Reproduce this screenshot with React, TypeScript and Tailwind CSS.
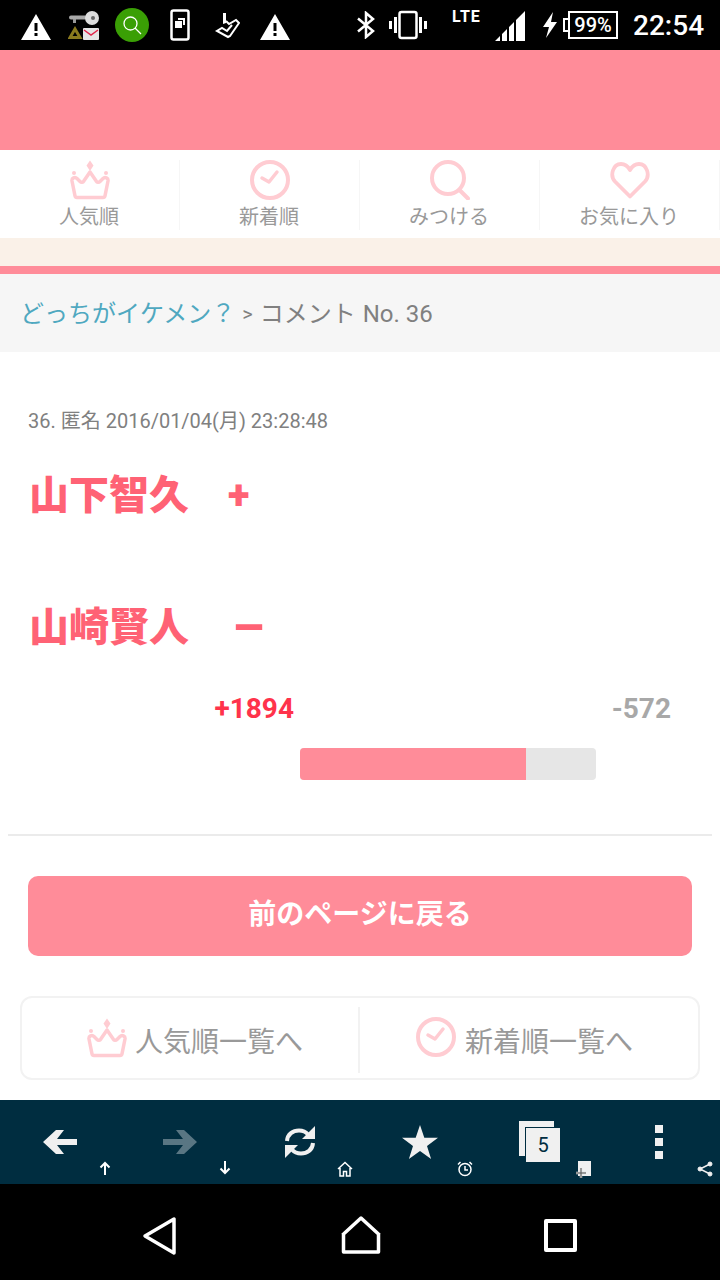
const jp = { fontFamily: 'Roboto, "Noto Sans CJK JP", sans-serif' };

const Crown = ({ className }: { className: string }) => (
  <svg viewBox="0 0 40 40" className={className} fill="none">
    <path d="M20 0.500l3.500 5-3.500 5.500-3.500-5.500z" fill="#ffccd2" />
    <circle cx="4" cy="13" r="2" fill="#ffccd2" />
    <circle cx="36" cy="13" r="2" fill="#ffccd2" />
    <path
      d="M7 37.500c-1 0-1.800-.7-2-1.600L2 21c-.5-3 3-4.500 5-2.500l3 3c1.200 1.200 3 1 3.800-.4L20 12l6.200 9.100c.8 1.400 2.600 1.600 3.800.4l3-3c2-2 5.500-.5 5 2.500l-3 14.900c-.2.900-1 1.600-2 1.600z"
      stroke="#ffccd2"
      strokeWidth="3.500"
      strokeLinejoin="round"
    />
  </svg>
);

const Clock = ({ className }: { className: string }) => (
  <svg viewBox="0 0 40 40" className={className} fill="none" stroke="#ffccd2">
    <circle cx="20" cy="20" r="18" strokeWidth="4" />
    <path d="M12 18l7 4 8-10" strokeWidth="3.500" strokeLinecap="round" strokeLinejoin="round" />
  </svg>
);

const Search = () => (
  <svg viewBox="0 0 40 40" className="w-10 h-10" fill="none" stroke="#ffccd2">
    <circle cx="18" cy="18" r="16" strokeWidth="4" />
    <path d="M29.500 30l8.500 8.500" strokeWidth="4" strokeLinecap="round" />
  </svg>
);

const Heart = () => (
  <svg viewBox="0 0 40 40" className="w-10 h-10" fill="none" stroke="#ffccd2">
    <path
      d="M20 36.500L5 21.500C-.5 15.500 3 4 11 4c4 0 7 2.500 9 6 2-3.500 5-6 9-6 8 0 11.500 11.500 6 17.500z"
      strokeWidth="3.800"
      strokeLinejoin="round"
    />
  </svg>
);

function StatusBar() {
  return (
    <div className="h-[50px] bg-black flex items-center relative shrink-0 text-white">
      <div className="flex items-center pl-[20px] w-[300px] h-full">
        {/* warning */}
        <svg viewBox="0 0 32 28" className="w-8 h-7 mt-[3px]">
          <path fillRule="evenodd" fill="#fff" d="M16 1L31 27H1zM14.500 10v8h3v-8zM14.500 20v3h3v-3z" />
        </svg>
        {/* key + mail */}
        <svg viewBox="0 0 32 32" className="w-8 h-8 ml-[16px] mt-[1px]">
          <rect x="1" y="5.500" width="18" height="4" rx="2" fill="#a8a8a8" />
          <circle cx="24" cy="8" r="7" fill="#ddd" />
          <circle cx="25" cy="8" r="2" fill="#666" />
          <rect x="5" y="9" width="3" height="4" fill="#999" />
          <path d="M7 19l5 8.500H2z" fill="none" stroke="#8a7a1e" strokeWidth="3" />
          <rect x="15" y="18" width="16" height="12" rx="1" fill="#e5e5e5" />
          <path d="M16 20l7 5 7-5" fill="none" stroke="#e0264a" strokeWidth="1.500" />
        </svg>
        <div className="w-[34px] h-[34px] rounded-full bg-[#3a9f05] ml-[15px] flex items-center justify-center">
          <svg viewBox="0 0 20 20" className="w-5 h-5" fill="none" stroke="#fff" strokeWidth="1.300">
            <circle cx="8.500" cy="8.500" r="6.500" />
            <path d="M13 13l6 6" />
          </svg>
        </div>
        <svg viewBox="0 0 20 32" className="w-5 h-8 ml-[21px]">
          <rect x="1.500" y="1.500" width="17" height="29" rx="2" fill="none" stroke="#fff" strokeWidth="2.500" />
          <path d="M8 9h7v7h-2v-5H8z" fill="#fff" />
          <rect x="5" y="12" width="7" height="7" fill="#fff" />
        </svg>
        <svg viewBox="0 0 26 28" className="w-[26px] h-7 ml-[24px]">
          <path d="M9 2h3v10l-3 1z" fill="#fff" />
          <path d="M12 10l3 3 7-4 3 3-9 13-2 1-11-6 5-3 5 3 5-6" fill="none" stroke="#fff" strokeWidth="2" />
        </svg>
        <svg viewBox="0 0 32 28" className="w-8 h-7 ml-[19px] mt-[3px]">
          <path fillRule="evenodd" fill="#fff" d="M16 1L31 27H1zM14.500 10v8h3v-8zM14.500 20v3h3v-3z" />
        </svg>
      </div>
      {/* bluetooth */}
      <svg viewBox="0 0 20 28" className="w-5 h-7 ml-[56px]" fill="none" stroke="#fff" strokeWidth="2.500">
        <path d="M2 7.500l15 12.500-7 6V2l7 6-15 12.500" />
      </svg>
      {/* vibrate */}
      <svg viewBox="0 0 38 30" className="w-[38px] h-[30px] ml-[13px]" fill="#fff">
        <rect x="10.500" y="2" width="17" height="26" rx="2" fill="none" stroke="#fff" strokeWidth="2.500" />
        <rect x="5" y="7" width="3" height="16" />
        <rect x="30" y="7" width="3" height="16" />
        <rect x="0" y="11" width="3" height="8" />
        <rect x="35" y="11" width="3" height="8" />
      </svg>
      <span className="absolute left-[452px] top-[7px] text-[16px] leading-[20px] font-bold tracking-[1px]" style={{ fontFamily: "Roboto, sans-serif" }}>
        LTE
      </span>
      <svg viewBox="0 0 30 30" className="absolute left-[495px] top-[11px] w-[30px] h-[30px]" fill="#fff">
        <path d="M0 30l5-5v5zM7 23l5-5v12H7zM14 16l5-5v19h-5zM21 9l9-9v30h-9z" />
      </svg>
      <svg viewBox="0 0 16 26" className="absolute left-[542px] top-[12px] w-4 h-[26px]" fill="#fff">
        <path d="M11 0L1 15h6l-3 11 11-16H9z" />
      </svg>
      <div className="absolute left-[568px] top-[11px] w-[50px] h-[28px] border-2 border-white flex items-center justify-center text-[20px] leading-none font-medium" style={{ fontFamily: "Roboto, sans-serif" }}>
        99%
      </div>
      <div className="absolute left-[563px] top-[18px] w-[5px] h-[14px] border-2 border-r-0 border-white" />
      <span className="absolute left-[633px] top-[9px] text-[28px] leading-[34px] font-medium" style={{ fontFamily: "Roboto, sans-serif" }}>
        22:54
      </span>
    </div>
  );
}

const navItems = [
  { label: "人気順", icon: <Crown className="w-10 h-10" /> },
  { label: "新着順", icon: <Clock className="w-10 h-10" /> },
  { label: "みつける", icon: <Search /> },
  { label: "お気に入り", icon: <Heart /> },
];

function TopNav() {
  return (
    <div className="h-[88px] bg-white flex pt-[10px] shrink-0" style={jp}>
      {navItems.map((item) => (
        <div key={item.label} className="w-[180px] h-[70px] border-r border-[#f6f6f6] flex flex-col items-center">
          {item.icon}
          <span className="text-[20px] leading-[26px] mt-[4px] -ml-[1px] text-[#999]">{item.label}</span>
        </div>
      ))}
    </div>
  );
}

function Toolbar() {
  return (
    <div className="h-[84px] bg-[#002d40] grid grid-cols-6 shrink-0 text-white">
      <div className="relative">
        <svg viewBox="0 0 34 24" className="absolute left-[43px] top-[30px] w-[34px] h-6" fill="#f0f0f0">
          <path d="M13 0h8l-7 9h20v6H14l7 9h-8L0 12z" />
        </svg>
        <svg viewBox="0 0 12 14" className="absolute left-[99px] top-[61px] w-3 h-[14px]" fill="none" stroke="#fff" strokeWidth="2">
          <path d="M6 14V2M1.500 6.500L6 2l4.500 4.500" />
        </svg>
      </div>
      <div className="relative">
        <svg viewBox="0 0 34 24" className="absolute left-[43px] top-[30px] w-[34px] h-6" fill="#597683">
          <path d="M21 0h-8l7 9H0v6h20l-7 9h8l13-12z" />
        </svg>
        <svg viewBox="0 0 12 14" className="absolute left-[99px] top-[61px] w-3 h-[14px]" fill="none" stroke="#fff" strokeWidth="2">
          <path d="M6 0v12M1.500 7.500L6 12l4.500-4.500" />
        </svg>
      </div>
      <div className="relative">
        <svg viewBox="0 0 32 34" className="absolute left-[44px] top-[25px] w-8 h-[34px]" fill="none">
          <path d="M3 16C3.500 9 9 5.500 15 5.500c4 0 7 1.500 9 4" stroke="#f0f0f0" strokeWidth="4" />
          <path d="M31 1v13H18z" fill="#f0f0f0" />
          <path d="M29 18c-.5 7-6 10.500-12 10.500-4 0-7-1.500-9-4" stroke="#f0f0f0" strokeWidth="4" />
          <path d="M1 33V20h13z" fill="#f0f0f0" />
        </svg>
        <svg viewBox="0 0 16 16" className="absolute left-[97px] top-[61px] w-4 h-4" fill="none" stroke="#fff" strokeWidth="1.500">
          <path d="M1 8l7-6.500L15 8M3 7v8h3.500v-4.500h3V15H13V7" />
        </svg>
      </div>
      <div className="relative">
        <svg viewBox="0 0 36 34" className="absolute left-[42px] top-[25px] w-9 h-[34px]" fill="#f0f0f0">
          <path d="M18 0l4.300 12.800H36l-11 8.300 4.100 12.900L18 26l-11.100 8L11 21.100 0 12.800h13.700z" />
        </svg>
        <svg viewBox="0 0 16 16" className="absolute left-[97px] top-[61px] w-4 h-4" fill="none" stroke="#fff" strokeWidth="1.500">
          <circle cx="8" cy="8.500" r="6" />
          <path d="M8 5v4h3M1 3.500L3.500 1M15 3.500L12.500 1" />
        </svg>
      </div>
      <div className="relative">
        <div className="absolute left-[39px] top-[21px] w-[35px] h-[35px] bg-[#f0f0f0]" />
        <div className="absolute left-[45px] top-[27px] w-[36px] h-[36px] bg-[#f0f0f0] border border-[#002d40] flex items-center justify-center text-[20px] text-[#002d40]" style={{ fontFamily: "Roboto, sans-serif" }}>
          5
        </div>
        <div className="absolute left-[98px] top-[61px] w-[13px] h-[15px] bg-[#f0f0f0]" />
        <svg viewBox="0 0 10 10" className="absolute left-[96px] top-[68px] w-[10px] h-[10px]" fill="none">
          <path d="M5 0v10M0 5h10" stroke="#dcdcdc" strokeWidth="2.400" />
          <path d="M5 0v10M0 5h10" stroke="#555" strokeWidth="1" />
        </svg>
      </div>
      <div className="relative">
        <div className="absolute left-[55px] top-[25px] w-2 h-2 bg-[#f0f0f0]" />
        <div className="absolute left-[55px] top-[38px] w-2 h-2 bg-[#f0f0f0]" />
        <div className="absolute left-[55px] top-[51px] w-2 h-2 bg-[#f0f0f0]" />
        <svg viewBox="0 0 16 16" className="absolute left-[97px] top-[61px] w-4 h-4" fill="#f0f0f0" stroke="#f0f0f0">
          <path d="M13 3L3 8l10 5" fill="none" strokeWidth="1.500" />
          <circle cx="13" cy="3" r="2" />
          <circle cx="3" cy="8" r="2" />
          <circle cx="13" cy="13" r="2" />
        </svg>
      </div>
    </div>
  );
}

function NavBar() {
  return (
    <div className="h-[96px] bg-black shrink-0">
      <svg viewBox="0 0 36 40" className="absolute left-[142px] top-[1216px] w-9 h-10" fill="none" stroke="#fff" strokeWidth="3.500">
        <path d="M32 3v34L3 20z" strokeLinejoin="round" />
      </svg>
      <svg viewBox="0 0 42 40" className="absolute left-[340px] top-[1215px] w-[42px] h-10" fill="none" stroke="#fff" strokeWidth="3.500">
        <path d="M2.500 20L21 3l18.500 17M3.500 19v18h35V19" strokeLinejoin="round" />
      </svg>
      <div className="absolute left-[544px] top-[1219px] w-[33px] h-[33px] border-[4px] border-white rounded-[2px]" />
    </div>
  );
}

export default function App() {
  return (
    <div className="w-[720px] h-[1280px] flex flex-col overflow-hidden bg-white relative" style={jp}>
      <StatusBar />
      <div className="h-[100px] bg-[#ff8c99] shrink-0" />
      <TopNav />
      <div className="h-[28px] bg-[#faf1e8] shrink-0" />
      <div className="h-[8px] bg-[#ff8c99] shrink-0" />
      <div className="h-[78px] bg-[#f6f6f6] shrink-0 flex items-center pl-[20px] pt-[1px] text-[24px] text-[#808080]">
        <span className="text-[#4fa8c0]">どっちがイケメン？</span>
        <span className="text-[20px] mx-[7px]">&gt;</span>
        <span>コメント</span>
        <span className="ml-[7px]">No. 36</span>
      </div>

      <div className="flex-1 flex flex-col px-[8px]">
        <div className="pt-[57px] pl-[20px] text-[20px] leading-[24px] text-[#808080]">
          36. 匿名 2016/01/04(月) 23:28:48
        </div>
        <div className="mt-[39px] pl-[21px] h-[48px] flex items-center text-[40px] leading-[48px] font-black text-[#ff6275]">
          <span>山下智久</span>
          <span className="ml-[39px]">+</span>
        </div>
        <div className="mt-[84px] pl-[21px] h-[48px] flex items-center text-[40px] leading-[48px] font-black text-[#ff6275]">
          <span>山崎賢人</span>
          <span className="ml-[43px] text-[52px] font-bold">–</span>
        </div>
        <div className="mt-[39px] h-[36px] relative font-bold text-[28px] leading-[36px]">
          <span className="absolute right-[418px] text-[#ff334b]">+1894</span>
          <span className="absolute right-[41px] text-[#a8a8a8]">-572</span>
        </div>
        <div className="mt-[21px] ml-[292px] w-[296px] h-[32px] rounded-[4px] bg-[#e6e6e6] overflow-hidden">
          <div className="h-full bg-[#ff8c99]" style={{ width: "76.4%" }} />
        </div>
        <div className="mt-[54px] border-t-2 border-[#ebebeb]" />
        <div className="mt-[40px] mx-[20px] h-[80px] pb-[2px] rounded-[10px] bg-[#ff8c99] flex items-center justify-center text-white font-bold text-[28px]">
          前のページに戻る
        </div>
        <div className="mt-[40px] mx-[12px] h-[84px] rounded-[12px] border-2 border-[#f2f2f2] flex items-center">
          <div className="w-[338px] h-[66px] mt-[4px] pl-[10px] flex items-center justify-center gap-[8px] border-r-2 border-[#f2f2f2] text-[28px] text-[#999]">
            <Crown className="w-10 h-10 mb-[4px]" />
            <span className="mt-[6px]">人気順一覧へ</span>
          </div>
          <div className="flex-1 h-[66px] mt-[4px] pr-[9px] flex items-center justify-center gap-[9px] text-[28px] text-[#999]">
            <Clock className="w-10 h-10 mb-[6px]" />
            <span className="mt-[6px]">新着順一覧へ</span>
          </div>
        </div>
      </div>
      <Toolbar />
      <NavBar />
    </div>
  );
}
